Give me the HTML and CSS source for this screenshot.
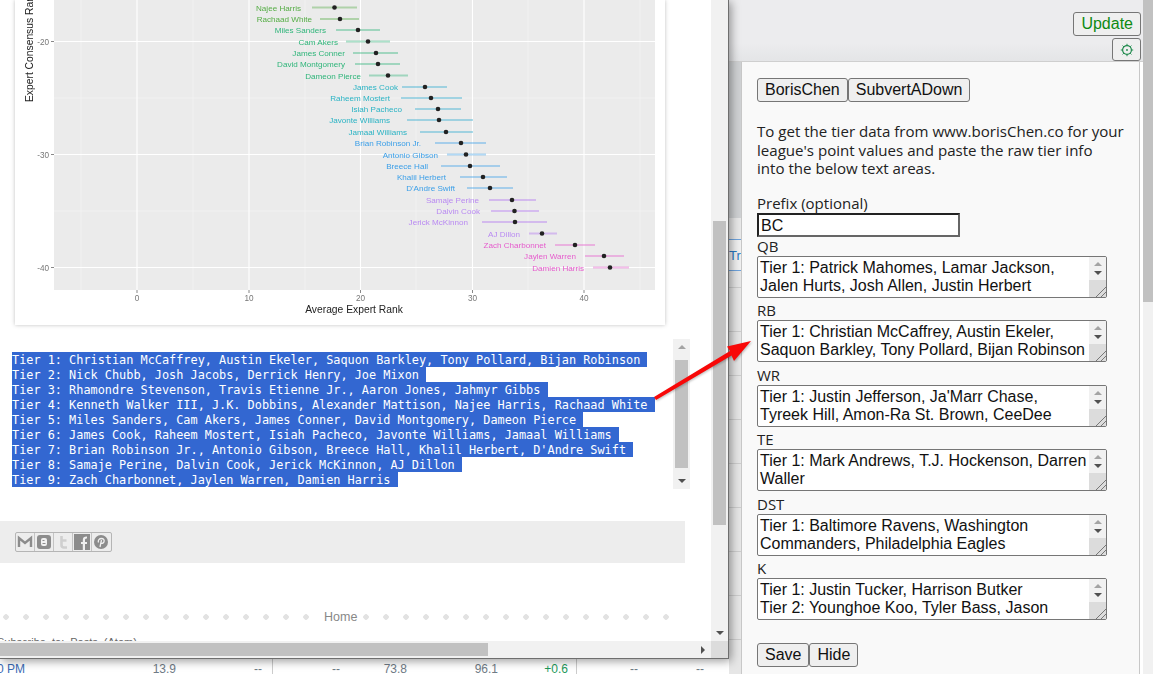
FILE: index.html
```html
<!DOCTYPE html>
<html>
  <head>
    <meta charset="utf-8">
    <link rel="stylesheet" href="styles.css">
  </head>
  <body>
    <div class="desktop">

      <!-- page behind the popup -->
      <div class="backdrop">
        <div class="backdrop-main">
          <div class="topbar">
            <button class="top-btn">Update</button>
            <button class="top-btn gear-btn">
              <svg width="14" height="14" viewBox="0 0 14 14">
                <circle cx="7" cy="7" r="4.4" fill="none" stroke="#1f8a4c" stroke-width="1.2"/>
                <circle cx="7" cy="7" r="0.9" fill="#1f8a4c"/>
                <path d="M7 0.8v1.8M7 11.4v1.8M0.8 7h1.8M11.4 7h1.8M2.6 2.6l1.2 1.2M10.2 10.2l1.2 1.2M2.6 11.4l1.2-1.2M10.2 3.8l1.2-1.2" stroke="#1f8a4c" stroke-width="1"/>
              </svg>
            </button>
          </div>
          <div class="backdrop-body">
            <div class="strip">
              <div class="strip-shade"></div>
              <div class="strip-row strip-blue">Tr</div>
              <div class="strip-lines"></div>
            </div>
            <div class="panel">
              <div class="btn-group">
                <button class="btn">BorisChen</button><button class="btn">SubvertADown</button>
              </div>
              <p class="intro">To get the tier data from www.borisChen.co for your<br>league's point values and paste the raw tier info<br>into the below text areas.</p>
              <div class="field-label prefix-label">Prefix (optional)</div>
              <div class="prefix-input">BC</div>

              <div class="field-label">QB</div>
              <div class="tier-box">
                <div class="tier-text">Tier 1: Patrick Mahomes, Lamar Jackson, Jalen Hurts, Josh Allen, Justin Herbert</div>
                <div class="tier-scroll"><div class="tier-arrows"><i class="arr-up"></i><i class="arr-down"></i></div><div class="grip"></div></div>
              </div>
              <div class="field-label">RB</div>
              <div class="tier-box">
                <div class="tier-text">Tier 1: Christian McCaffrey, Austin Ekeler, Saquon Barkley, Tony Pollard, Bijan Robinson</div>
                <div class="tier-scroll"><div class="tier-arrows"><i class="arr-up"></i><i class="arr-down"></i></div><div class="grip"></div></div>
              </div>
              <div class="field-label">WR</div>
              <div class="tier-box">
                <div class="tier-text">Tier 1: Justin Jefferson, Ja'Marr Chase, Tyreek Hill, Amon-Ra St. Brown, CeeDee</div>
                <div class="tier-scroll"><div class="tier-arrows"><i class="arr-up"></i><i class="arr-down"></i></div><div class="grip"></div></div>
              </div>
              <div class="field-label">TE</div>
              <div class="tier-box">
                <div class="tier-text">Tier 1: Mark Andrews, T.J. Hockenson, Darren Waller</div>
                <div class="tier-scroll"><div class="tier-arrows"><i class="arr-up"></i><i class="arr-down"></i></div><div class="grip"></div></div>
              </div>
              <div class="field-label">DST</div>
              <div class="tier-box">
                <div class="tier-text">Tier 1: Baltimore Ravens, Washington Commanders, Philadelphia Eagles</div>
                <div class="tier-scroll"><div class="tier-arrows"><i class="arr-up"></i><i class="arr-down"></i></div><div class="grip"></div></div>
              </div>
              <div class="field-label">K</div>
              <div class="tier-box">
                <div class="tier-text">Tier 1: Justin Tucker, Harrison Butker<br>Tier 2: Younghoe Koo, Tyler Bass, Jason</div>
                <div class="tier-scroll"><div class="tier-arrows"><i class="arr-up"></i><i class="arr-down"></i></div><div class="grip"></div></div>
              </div>

              <div class="btn-group save-group">
                <button class="btn">Save</button><button class="btn">Hide</button>
              </div>
            </div>
          </div>
        </div>
        <div class="page-scroll"><div class="page-thumb"></div></div>
      </div>

      <!-- table row peeking out under the popup -->
      <div class="table-row">
        <span class="cell-time">0 PM</span><span>13.9</span><span>--</span><span>--</span><span>73.8</span><span>96.1</span><span class="cell-up">+0.6</span><span>--</span><span>--</span>
      </div>

      <!-- popup window -->
      <div class="window">
        <div class="view">
          <div class="chart-card">
            <svg class="chart" width="650" height="325" viewBox="15 0 650 325">
              <rect x="54" y="0" width="601" height="290" fill="#ebebeb"/>
              <path class="grid-minor" d="M81 0V290M193 0V290M305 0V290M416 0V290M528 0V290M640 0V290M54 98H655M54 211H655"/>
              <path class="grid-major" d="M137 0V290M249 0V290M360.5 0V290M472.5 0V290M584 0V290M54 41.5H655M54 154.5H655M54 267.5H655"/>
              <path class="axis-tick" d="M51 41.5h3M51 154.5h3M51 267.5h3M137 290v3M249 290v3M360.5 290v3M472.5 290v3M584 290v3"/>

              <g class="tick-label">
                <text x="49" y="44.500" text-anchor="end">-20</text>
                <text x="49" y="157.500" text-anchor="end">-30</text>
                <text x="49" y="270.500" text-anchor="end">-40</text>
                <text x="137" y="301" text-anchor="middle">0</text>
                <text x="249" y="301" text-anchor="middle">10</text>
                <text x="360.5" y="301" text-anchor="middle">20</text>
                <text x="472.5" y="301" text-anchor="middle">30</text>
                <text x="584" y="301" text-anchor="middle">40</text>
              </g>
              <text class="axis-title" x="354" y="313" text-anchor="middle">Average Expert Rank</text>
              <text class="axis-title" transform="translate(32.500 102) rotate(-90)">Expert Consensus Rank</text>

              <g class="tier tier-4">
                <path d="M312 7.5H357M320 19H359"/>
                <text x="301" y="10.5" text-anchor="end">Najee Harris</text>
                <text x="312" y="22" text-anchor="end">Rachaad White</text>
              </g>
              <g class="tier tier-5">
                <path d="M336 30H380M346 41.5H390M353 53H398M355 64H400M369 75.5H408"/>
                <text x="326" y="33" text-anchor="end">Miles Sanders</text>
                <text x="338" y="44.5" text-anchor="end">Cam Akers</text>
                <text x="345" y="56" text-anchor="end">James Conner</text>
                <text x="345" y="67" text-anchor="end">David Montgomery</text>
                <text x="361" y="78.5" text-anchor="end">Dameon Pierce</text>
              </g>
              <g class="tier tier-6">
                <path d="M402 87H447M401 98H462M415 109H461M407 120H473M420 132H473"/>
                <text x="398" y="90" text-anchor="end">James Cook</text>
                <text x="390" y="101" text-anchor="end">Raheem Mostert</text>
                <text x="402" y="112" text-anchor="end">Isiah Pacheco</text>
                <text x="390" y="123" text-anchor="end">Javonte Williams</text>
                <text x="407" y="135" text-anchor="end">Jamaal Williams</text>
              </g>
              <g class="tier tier-7">
                <path d="M435 143H486M447 154.5H486M441 166H500M460 177H507M467 188H513"/>
                <text x="421" y="146" text-anchor="end">Brian Robinson Jr.</text>
                <text x="438" y="157.5" text-anchor="end">Antonio Gibson</text>
                <text x="428" y="169" text-anchor="end">Breece Hall</text>
                <text x="446" y="180" text-anchor="end">Khalil Herbert</text>
                <text x="455" y="191" text-anchor="end">D'Andre Swift</text>
              </g>
              <g class="tier tier-8">
                <path d="M489 200H536M491 211H539M482 222H547M529 233.5H557"/>
                <text x="479" y="203" text-anchor="end">Samaje Perine</text>
                <text x="480" y="214" text-anchor="end">Dalvin Cook</text>
                <text x="468" y="225" text-anchor="end">Jerick McKinnon</text>
                <text x="520" y="236.5" text-anchor="end">AJ Dillon</text>
              </g>
              <g class="tier tier-9">
                <path d="M555 245H595M585 256H624M593 267.5H629"/>
                <text x="546" y="248" text-anchor="end">Zach Charbonnet</text>
                <text x="576" y="259" text-anchor="end">Jaylen Warren</text>
                <text x="584" y="270.5" text-anchor="end">Damien Harris</text>
              </g>

              <g class="dots">
                <circle cx="334.5" cy="7.5" r="2.300"/><circle cx="340" cy="19" r="2.300"/><circle cx="358" cy="30" r="2.300"/><circle cx="368" cy="41.5" r="2.300"/><circle cx="376" cy="53" r="2.300"/><circle cx="378" cy="64" r="2.300"/><circle cx="388" cy="75.5" r="2.300"/>
                <circle cx="425" cy="87" r="2.300"/><circle cx="431" cy="98" r="2.300"/><circle cx="438" cy="109" r="2.300"/><circle cx="439" cy="120" r="2.300"/><circle cx="446" cy="132" r="2.300"/>
                <circle cx="461" cy="143" r="2.300"/><circle cx="466" cy="154.5" r="2.300"/><circle cx="470" cy="166" r="2.300"/><circle cx="483" cy="177" r="2.300"/><circle cx="490" cy="188" r="2.300"/>
                <circle cx="512" cy="200" r="2.300"/><circle cx="514.5" cy="211" r="2.300"/><circle cx="515" cy="222" r="2.300"/><circle cx="542" cy="233.5" r="2.300"/>
                <circle cx="575" cy="245" r="2.300"/><circle cx="604" cy="256" r="2.300"/><circle cx="610" cy="267.5" r="2.300"/>
              </g>
            </svg>
          </div>

          <div class="code-box">
            <div class="code-lines">
              <span>Tier 1: Christian McCaffrey, Austin Ekeler, Saquon Barkley, Tony Pollard, Bijan Robinson </span>
              <span>Tier 2: Nick Chubb, Josh Jacobs, Derrick Henry, Joe Mixon </span>
              <span>Tier 3: Rhamondre Stevenson, Travis Etienne Jr., Aaron Jones, Jahmyr Gibbs </span>
              <span>Tier 4: Kenneth Walker III, J.K. Dobbins, Alexander Mattison, Najee Harris, Rachaad White </span>
              <span>Tier 5: Miles Sanders, Cam Akers, James Conner, David Montgomery, Dameon Pierce </span>
              <span>Tier 6: James Cook, Raheem Mostert, Isiah Pacheco, Javonte Williams, Jamaal Williams </span>
              <span>Tier 7: Brian Robinson Jr., Antonio Gibson, Breece Hall, Khalil Herbert, D'Andre Swift </span>
              <span>Tier 8: Samaje Perine, Dalvin Cook, Jerick McKinnon, AJ Dillon </span>
              <span>Tier 9: Zach Charbonnet, Jaylen Warren, Damien Harris </span>
            </div>
            <div class="code-scroll">
              <i class="arr-up"></i>
              <div class="code-thumb"></div>
              <i class="arr-down"></i>
            </div>
          </div>

          <div class="share-bar">
            <div class="share-icons">
              <a class="share-icon">
                <svg width="18" height="18" viewBox="0 0 18 18"><path d="M3 14V5l6 5 6-5v9" fill="none" stroke="#8c8c8c" stroke-width="2.4"/></svg>
              </a>
              <a class="share-icon">
                <svg width="18" height="18" viewBox="0 0 18 18"><rect x="2" y="2" width="14" height="14" rx="3" fill="#8c8c8c"/><rect x="6" y="5" width="6" height="8" rx="2" fill="#f0f0f0"/><path d="M7.5 7.5h2M7.5 10.5h3" stroke="#8c8c8c"/></svg>
              </a>
              <a class="share-icon">
                <svg width="18" height="18" viewBox="0 0 18 18"><path d="M7.5 3v9c0 2 1 2.500 2.500 2.500h3M7.500 7.500h5" fill="none" stroke="#cfcfcf" stroke-width="2.600"/></svg>
              </a>
              <a class="share-icon">
                <svg width="18" height="18" viewBox="0 0 18 18"><rect x="1" y="1" width="16" height="16" fill="#8c8c8c"/><path d="M12 17v-6h2v-2h-2V7c0-1 .5-1.500 2-1.500V3.500c-3 0-4.200 1-4.200 3.500v2H8v2h1.800v6z" fill="#f0f0f0"/></svg>
              </a>
              <a class="share-icon">
                <svg width="18" height="18" viewBox="0 0 18 18"><circle cx="9" cy="9" r="7" fill="#8c8c8c"/><path d="M8 14l1.500-7M6.500 9.500C5.500 7 7.500 5.500 9.500 5.500c2 0 3 1.500 2.500 3.200-.5 1.800-2.500 2-3.200 1" fill="none" stroke="#f0f0f0" stroke-width="1.300"/></svg>
              </a>
            </div>
          </div>

          <div class="footer-nav">
            <div class="dots-line"></div>
            <span class="home-link">Home</span>
            <div class="dots-line"></div>
          </div>
          <div class="subscribe">Subscribe to: Posts (Atom)</div>
        </div>

        <div class="vbar">
          <div class="vbar-thumb"></div>
          <i class="arr-down"></i>
        </div>
        <div class="hbar">
          <div class="hbar-thumb"></div>
          <i class="arr-right"></i>
        </div>
        <div class="corner"></div>
      </div>

      <!-- annotation arrow -->
      <svg class="red-arrow" width="110" height="70" viewBox="650 335 110 70">
        <polygon points="654,397 730,351 727,346.500 751,341 734,361 731.500,355.500 656,400" fill="#f80808"/>
      </svg>
    </div>
  </body>
</html>
```

FILE: styles.css
```css
* {
  box-sizing: border-box;
}

body {
  margin: 0;
  font-family: "Liberation Sans", Arial, sans-serif;
}

.desktop {
  position: relative;
  width: 1153px;
  height: 674px;
  overflow: hidden;
  background-color: #fff;
}

/* popup window */
.window {
  position: absolute;
  top: 0;
  left: 0;
  width: 729px;
  height: 659px;
  display: grid;
  grid-template-columns: 711px 17px;
  grid-template-rows: 641px 17px;
  background-color: #fff;
  border-right: 1px solid #6e6e6e;
  border-bottom: 1px solid #6e6e6e;
  box-shadow: 2px 2px 9px rgba(0, 0, 0, 0.4);
}

.view {
  overflow: hidden;
}

.chart-card {
  width: 650px;
  height: 325px;
  margin-left: 15px;
  background-color: #fff;
  box-shadow: 0 0 4px rgba(0, 0, 0, 0.25);
}

.chart {
  display: block;
  filter: blur(0.4px);
  font-family: "Liberation Sans", Arial, sans-serif;
}

.grid-minor {
  fill: none;
  stroke: #f3f3f3;
  stroke-width: 0.7;
}

.grid-major {
  fill: none;
  stroke: #fff;
  stroke-width: 1.1;
}

.axis-tick {
  fill: none;
  stroke: #555;
  stroke-width: 0.7;
}

.tick-label {
  font-size: 8.2px;
  fill: #777;
}

.axis-title {
  font-size: 10.3px;
  fill: #222;
}

.tier {
  font-size: 8.1px;
}

.tier path {
  fill: none;
  stroke-width: 2;
  opacity: 0.4;
}

.tier-4 { fill: #55ad45; }
.tier-4 path { stroke: #55ad45; }
.tier-5 { fill: #2fb57a; }
.tier-5 path { stroke: #2fb57a; }
.tier-6 { fill: #2ab3c4; }
.tier-6 path { stroke: #2ea9d0; }
.tier-7 { fill: #3b9fe8; }
.tier-7 path { stroke: #3b9fe8; }
.tier-8 { fill: #b98af2; }
.tier-8 path { stroke: #b070f0; }
.tier-9 { fill: #e65ccd; }
.tier-9 path { stroke: #e65ccd; }

.dots {
  fill: #222;
}

.code-box {
  display: flex;
  justify-content: space-between;
  width: 690px;
  height: 150px;
  margin-top: 14px;
}

.code-lines {
  display: flex;
  flex-direction: column;
  align-items: flex-start;
  padding: 13px 0 0 12px;
  font-family: "DejaVu Sans Mono", monospace;
  font-size: 11.87px;
}

.code-lines span {
  height: 15px;
  line-height: 17px;
  white-space: pre;
  color: #fff;
  background-color: #3367d1;
}

.code-scroll {
  width: 17px;
  display: flex;
  flex-direction: column;
  align-items: center;
  justify-content: space-between;
  padding: 6px 0;
  background-color: #f1f1f1;
}

.code-thumb {
  width: 13px;
  height: 108px;
  background-color: #c1c1c1;
}

.share-bar {
  display: flex;
  align-items: center;
  width: 685px;
  height: 42px;
  margin-top: 32px;
  padding-left: 15px;
  background-color: #ededed;
}

.share-icons {
  display: flex;
  border: 1px solid #b5b5b5;
  border-radius: 2px;
}

.share-icon {
  display: block;
  width: 19px;
  height: 18px;
  border-right: 1px solid #c4c4c4;
}

.share-icon:last-child {
  border-right: none;
}

.footer-nav {
  display: flex;
  align-items: center;
  height: 18px;
  margin-top: 45px;
}

.dots-line {
  width: 316px;
  height: 6px;
  background-image: radial-gradient(circle at 6px 3px, #e2e2e2 2.5px, transparent 3px);
  background-size: 20px 6px;
  background-repeat: repeat-x;
}

.home-link {
  width: 44px;
  padding-left: 8px;
  font-size: 12.5px;
  color: #888;
}

.subscribe {
  margin: 9px 0 0 -3px;
  font-size: 11px;
  line-height: 14px;
  color: #666;
  word-spacing: 3px;
}

/* scrollbars */
.vbar {
  display: flex;
  flex-direction: column;
  align-items: center;
  justify-content: space-between;
  padding: 221px 0 6px;
  background-color: #f1f1f1;
}

.vbar-thumb {
  width: 13px;
  height: 304px;
  background-color: #c1c1c1;
}

.hbar {
  display: flex;
  align-items: center;
  justify-content: space-between;
  padding-right: 6px;
  background-color: #f1f1f1;
}

.hbar-thumb {
  width: 488px;
  height: 13px;
  background-color: #c1c1c1;
}

.corner {
  background-color: #dcdcdc;
}

.arr-up,
.arr-down,
.arr-right {
  display: block;
  width: 0;
  height: 0;
  border-style: solid;
  border-color: transparent;
}

.arr-up {
  border-width: 0 4px 4px;
  border-bottom-color: #a3a3a3;
}

.arr-down {
  border-width: 4px 4px 0;
  border-top-color: #505050;
}

.arr-right {
  border-width: 4px 0 4px 4px;
  border-left-color: #505050;
}

/* page behind */
.backdrop {
  position: absolute;
  top: 0;
  left: 729px;
  right: 0;
  bottom: 0;
  display: flex;
}

.backdrop-main {
  width: 414px;
  display: flex;
  flex-direction: column;
}

.topbar {
  height: 62px;
  display: flex;
  flex-direction: column;
  align-items: flex-end;
  gap: 2px;
  padding: 12px 2px 0 0;
  background: linear-gradient(#ececee 70%, #e4e5e7);
  border-bottom: 1px solid #cfcfcf;
}

.top-btn {
  height: 24px;
  padding: 0 7px;
  font-family: "Liberation Sans", Arial, sans-serif;
  font-size: 16px;
  color: #0d8a12;
  background-color: #efefef;
  border: 1px solid #767676;
  border-radius: 3px;
}

.gear-btn {
  width: 29px;
  height: 23px;
  padding: 0;
  display: flex;
  align-items: center;
  justify-content: center;
}

.backdrop-body {
  flex: 1;
  display: flex;
  min-height: 0;
}

.strip {
  width: 12px;
  display: flex;
  flex-direction: column;
  background-color: #e6e6e6;
}

.strip-shade {
  height: 177px;
  background: linear-gradient(#cfd1d3 88%, #e8e8e8 88%);
}

.strip-row {
  height: 32px;
  overflow: hidden;
  font-size: 13px;
  line-height: 32px;
  color: #2a79c4;
  background-color: #f0f0f0;
}

.strip-blue {
  border-top: 1px solid #6fa3dc;
  border-bottom: 1px solid #6fa3dc;
}

.strip-lines {
  flex: 1;
  background-image: linear-gradient(#cdcdcd 1px, transparent 1px);
  background-size: 12px 44px;
  background-position: 0 16px;
}

.panel {
  width: 399px;
  padding: 16px 15px 0;
  background-color: #f9f9f9;
  border-left: 1px solid #c8c8c8;
  border-right: 1px solid #c8c8c8;
  color: #222;
}

.btn-group {
  display: flex;
}

.btn {
  height: 24px;
  padding: 0 7px;
  font-family: "Liberation Sans", Arial, sans-serif;
  font-size: 16px;
  color: #111;
  background-color: #efefef;
  border: 1px solid #767676;
  border-radius: 3px;
}

.intro {
  margin: 20px 0 0;
  font-family: "Open Sans", sans-serif;
  font-size: 15.08px;
  line-height: 18.667px;
  white-space: nowrap;
}

.field-label {
  height: 19px;
  font-family: "Open Sans", sans-serif;
  font-size: 15px;
  line-height: 19px;
}

.prefix-label {
  margin-top: 16px;
}

.prefix-input {
  width: 203px;
  height: 24px;
  padding-left: 2px;
  font-size: 16px;
  line-height: 21px;
  color: #111;
  background-color: #fff;
  border: 2px solid;
  border-color: #222 #666 #666 #222;
}

.tier-box {
  display: flex;
  width: 350px;
  height: 42px;
  margin-bottom: 3.400px;
  background-color: #fff;
  border: 1px solid #767676;
  border-radius: 2px;
  overflow: hidden;
}

.tier-text {
  flex: 1;
  padding: 2px 0 0 2px;
  font-size: 16px;
  line-height: 18px;
  color: #111;
}

.tier-scroll {
  width: 17px;
  display: flex;
  flex-direction: column;
  background-color: #f1f1f1;
}

.tier-arrows {
  height: 23px;
  display: flex;
  flex-direction: column;
  align-items: center;
  justify-content: center;
  gap: 5px;
}

.grip {
  flex: 1;
  background-color: #dcdcdc;
  background-image: linear-gradient(135deg, transparent 68%, #777 68%, #777 73%, transparent 73%, transparent 83%, #777 83%, #777 88%, transparent 88%);
}

.save-group {
  margin-top: 23px;
}

.page-scroll {
  width: 10px;
  background-color: #f1f1f1;
}

.page-thumb {
  height: 302px;
  background-color: #c1c1c1;
}

.table-row {
  position: absolute;
  top: 659px;
  left: 0;
  width: 729px;
  height: 15px;
  display: grid;
  grid-template-columns: 25px 151px 86px 78px 67px 91px 70px 70px 66px;
  justify-items: end;
  font-size: 12px;
  line-height: 21px;
  white-space: nowrap;
  color: #6f7b86;
  background-image: linear-gradient(#ccc, #ccc), linear-gradient(#ccc, #ccc);
  background-size: 1px 100%, 1px 100%;
  background-position: 272px 0, 576px 0;
  background-repeat: no-repeat;
}

.cell-time {
  color: #3a6bb5;
}

.cell-up {
  color: #1d9a5a;
}

.red-arrow {
  position: absolute;
  top: 335px;
  left: 650px;
  filter: drop-shadow(1px 1px 1px rgba(0, 0, 0, 0.25));
}
```
